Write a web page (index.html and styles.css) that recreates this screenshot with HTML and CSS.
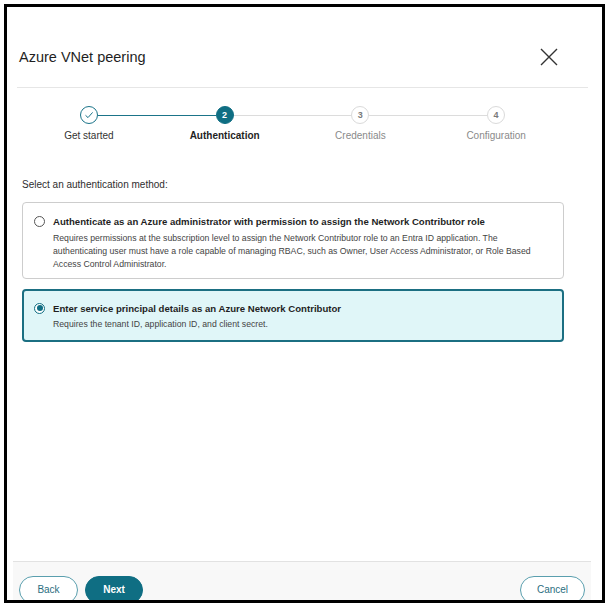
FILE: index.html
```html
<!DOCTYPE html>
<html lang="en">
<head>
<meta charset="utf-8">
<title>Azure VNet peering</title>
<link rel="stylesheet" href="styles.css">
</head>
<body>
<div class="dialog">
  <header class="dlg-head">
    <h1 class="dlg-title">Azure VNet peering</h1>
    <button class="close" aria-label="Close">
      <svg width="18" height="18" viewBox="0 0 18 18"><path d="M1 1 L17 17 M17 1 L1 17" stroke="#333" stroke-width="1.4" fill="none"/></svg>
    </button>
  </header>

  <main class="dlg-body">
    <ol class="stepper">
      <li class="step done">
        <span class="dot"><svg width="10" height="10" viewBox="0 0 10 10"><path d="M1.5 5.3 L4 7.6 L8.6 2.4" stroke="#1b7489" stroke-width="1" fill="none"/></svg></span>
        <span class="label">Get started</span>
      </li>
      <li class="step active">
        <span class="dot">2</span>
        <span class="label">Authentication</span>
      </li>
      <li class="step">
        <span class="dot">3</span>
        <span class="label">Credentials</span>
      </li>
      <li class="step">
        <span class="dot">4</span>
        <span class="label">Configuration</span>
      </li>
    </ol>

    <p class="prompt">Select an authentication method:</p>

    <div class="options">
      <label class="option">
        <span class="radio"></span>
        <span class="opt-text">
          <span class="opt-title">Authenticate as an Azure administrator with permission to assign the Network Contributor role</span>
          <span class="opt-desc">Requires permissions at the subscription level to assign the Network Contributor role to an Entra ID application. The authenticating user must have a role capable of managing RBAC, such as Owner, User Access Administrator, or Role Based Access Control Administrator.</span>
        </span>
      </label>
      <label class="option selected">
        <span class="radio"></span>
        <span class="opt-text">
          <span class="opt-title">Enter service principal details as an Azure Network Contributor</span>
          <span class="opt-desc">Requires the tenant ID, application ID, and client secret.</span>
        </span>
      </label>
    </div>
  </main>

  <footer class="dlg-foot">
    <div class="foot-left">
      <button class="btn btn-outline">Back</button>
      <button class="btn btn-primary">Next</button>
    </div>
    <button class="btn btn-outline">Cancel</button>
  </footer>
</div>
</body>
</html>
```

FILE: styles.css
```css
* { box-sizing: border-box; }

html, body {
  margin: 0;
  padding: 0;
  background: #fff;
}

body {
  font-family: "Liberation Sans", Arial, sans-serif;
  color: #1f1f1f;
}

/* framed dialog */
.dialog {
  margin: 4px 0 0 4px;
  width: 601px;
  height: 599px;
  border: 3px solid #000;
  background: #fff;
  display: flex;
  flex-direction: column;
  overflow: hidden;
}

/* header */
.dlg-head {
  margin: 0 14px 0 10px;
  padding: 41px 30px 0 2px;
  height: 81px;
  border-bottom: 1px solid #e6e6e6;
  display: flex;
  justify-content: space-between;
  align-items: flex-start;
}

.dlg-title {
  margin: 0;
  font-size: 14.5px;
  line-height: 19px;
  font-weight: 400;
  color: #1f1f1f;
}

.close {
  padding: 0;
  border: 0;
  background: none;
  width: 18px;
  height: 18px;
  display: block;
}
.close svg { display: block; }

/* body */
.dlg-body {
  flex: 1;
  min-height: 0;
  padding: 18px 38px 0 14px;
}

/* stepper */
.stepper {
  list-style: none;
  margin: 0;
  padding: 0;
  display: grid;
  grid-template-columns: repeat(4, 1fr);
}

.step {
  position: relative;
  display: flex;
  flex-direction: column;
  align-items: center;
}

/* connector from the previous step's dot to this one */
.step + .step::before {
  content: "";
  position: absolute;
  top: 8.5px;
  left: calc(-50% + 9px);
  right: calc(50% + 9px);
  height: 1px;
  background: #dcdcdc;
}
.step.active::before {
  height: 1.5px;
  background: #1b7489;
}

.dot {
  width: 18px;
  height: 18px;
  border-radius: 50%;
  border: 1.5px solid #dadada;
  background: #fff;
  display: flex;
  align-items: center;
  justify-content: center;
  font-size: 9px;
  font-weight: 700;
  color: #7a7a7a;
  margin-bottom: 6px;
}
.step.done .dot {
  border-color: #1b7489;
}
.step.active .dot {
  border-color: #0f6e83;
  background: #0f6e83;
  color: #fff;
}

.label {
  font-size: 10px;
  line-height: 12px;
  color: #8a8a8a;
  white-space: nowrap;
}
.step.done .label { color: #333; }
.step.active .label { color: #1f1f1f; font-weight: 700; }

/* prompt */
.prompt {
  margin: 37px 0 11px 1px;
  font-size: 10px;
  line-height: 12px;
  color: #2e2e2e;
}

/* option cards */
.options {
  display: flex;
  flex-direction: column;
  gap: 10px;
  margin-left: 1px;
}

.option {
  display: flex;
  gap: 8px;
  padding: 12px 12px 7px 11px;
  border: 1px solid #cdcdcd;
  border-radius: 4px;
  background: #fff;
}
.option.selected {
  padding: 10.5px 11px 9.5px 10px;
  border: 2px solid #1b6f82;
  background: #e0f6f8;
}

.radio {
  flex: none;
  width: 11px;
  height: 11px;
  margin-top: 1px;
  border-radius: 50%;
  border: 1.5px solid #555;
  background: #fff;
  position: relative;
}
.option.selected .radio {
  border-color: #0f6e83;
}
.option.selected .radio::after {
  content: "";
  position: absolute;
  inset: 1.5px;
  border-radius: 50%;
  background: #0f6e83;
}

.opt-text {
  display: flex;
  flex-direction: column;
  gap: 4px;
  max-width: 480px;
}
.option.selected .opt-text { gap: 3px; }

.opt-title {
  font-size: 9.6px;
  line-height: 13px;
  font-weight: 700;
  color: #1f1f1f;
  white-space: nowrap;
}

.opt-desc {
  font-size: 8.7px;
  line-height: 13px;
  color: #444;
}

/* footer */
.dlg-foot {
  flex: none;
  height: 39px;
  margin: 0 11px 0 6px;
  padding: 14px 6px 0 6px;
  border-top: 1px solid #e2e2e2;
  background: #f8f8f8;
  display: flex;
  justify-content: space-between;
  align-items: flex-start;
}

.foot-left {
  display: flex;
  gap: 7px;
}

.btn {
  height: 28px;
  padding: 0 14px;
  border-radius: 14px;
  font-family: inherit;
  font-size: 10px;
  line-height: 26px;
  cursor: pointer;
}
.btn-outline {
  min-width: 59px;
  border: 1px solid #5a9fae;
  background: #fff;
  color: #2b6e80;
}
.btn-primary {
  min-width: 58px;
  border: 1px solid #0f6e83;
  background: #0f6e83;
  color: #fff;
  font-weight: 700;
}
.dlg-foot > .btn-outline { min-width: 65px; }
```
